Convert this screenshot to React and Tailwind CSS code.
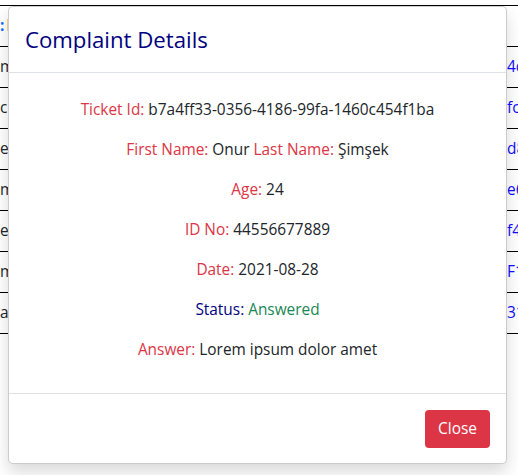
import React from "react";

const leftBits = ["", "m", " c", "e", "m", "es", "m", " a"];
const rightBits = ["", "4c", "fc", "d8", "e6", "f4", "F1", "31"];

export default function App() {
  const font = { fontFamily: '"Open Sans", "Noto Sans", sans-serif' };
  return (
    <div className="relative w-[518px] h-[475px] overflow-hidden bg-white text-[#212529]" style={font}>
      <div className="pt-[5px]">
        <div className="border-t border-black">
          {leftBits.map((l, i) => (
            <div key={i} className="h-[41px] border-b border-black flex items-center justify-between text-[15.4px]">
              {i === 0 ? (
                <span className="font-bold flex"><span className="text-[#0d6efd]">:</span><span className="ml-[2px]">I</span></span>
              ) : (
                <span className="text-[#212529]">{l}</span>
              )}
              <span className="text-[#0d0dff] w-[11px] overflow-hidden whitespace-nowrap">{rightBits[i]}</span>
            </div>
          ))}
        </div>
      </div>

      <div className="absolute left-[8px] top-[6px] w-[499px] bg-white border border-black/20 rounded-[5px] shadow-[0_0.5rem_1rem_rgba(0,0,0,0.15)] flex flex-col">
        <div className="h-[66px] border-b border-[#dee2e6] px-4 flex items-center">
          <h4 className="text-[22.2px] leading-[36px] text-[#000080] font-medium">Complaint Details</h4>
        </div>
        <div className="pt-[25px] pb-[31px] px-4 flex flex-col gap-4 text-center text-[15.4px] leading-[24px]">
          <p><span className="text-[#dc3545]">Ticket Id:</span> b7a4ff33-0356-4186-99fa-1460c454f1ba</p>
          <p><span className="text-[#dc3545]">First Name:</span> Onur <span className="text-[#dc3545]">Last Name:</span> Şimşek</p>
          <p><span className="text-[#dc3545]">Age:</span> 24</p>
          <p><span className="text-[#dc3545]">ID No:</span> 44556677889</p>
          <p><span className="text-[#dc3545]">Date:</span> 2021-08-28</p>
          <p><span className="text-[#000080]">Status:</span> <span className="text-[#198754]">Answered</span></p>
          <p><span className="text-[#dc3545]">Answer:</span> Lorem ipsum dolor amet</p>
        </div>
        <div className="border-t border-[#dee2e6] pt-4 pb-[15px] pr-4 flex justify-end">
          <button className="h-[38px] w-[65px] rounded-[4px] bg-[#dc3545] text-white text-[15.4px]">Close</button>
        </div>
      </div>
    </div>
  );
}
